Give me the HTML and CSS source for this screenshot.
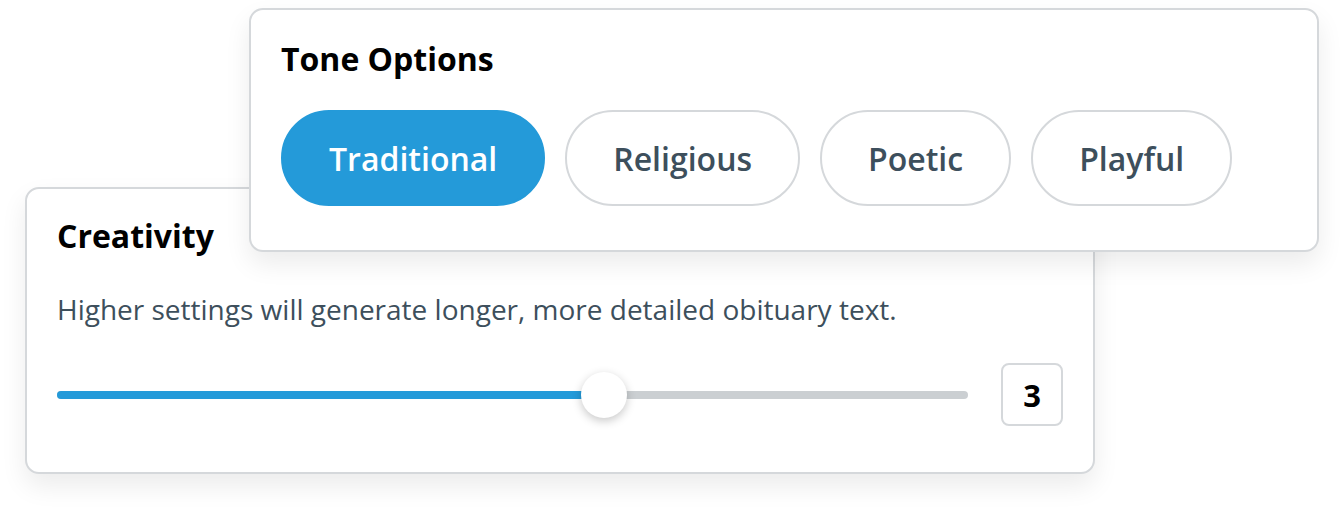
FILE: index.html
```html
<!DOCTYPE html>
<html lang="en">
<head>
    <meta charset="UTF-8">
    <meta name="viewport" content="width=device-width, initial-scale=1.0">
    <title>Obituary Settings</title>
    <link rel="stylesheet" href="styles.css">
</head>
<body>
    <div class="stage">
        <div class="card creativity">
            <h2 class="card-title">Creativity</h2>
            <p class="hint">Higher settings will generate longer, more detailed obituary text.</p>
            <div class="slider-row">
                <div class="slider">
                    <div class="track-fill" style="width: 60%;"></div>
                    <div class="thumb" style="left: 60%;"></div>
                </div>
                <div class="value-box">3</div>
            </div>
        </div>
        <div class="card tone">
            <h2 class="card-title">Tone Options</h2>
            <div class="pills">
                <button class="pill active">Traditional</button>
                <button class="pill">Religious</button>
                <button class="pill">Poetic</button>
                <button class="pill">Playful</button>
            </div>
        </div>
    </div>
</body>
</html>
```

FILE: styles.css
```css
body {
    margin: 0;
    background: #fff;
    font-family: "Open Sans", "Noto Sans", sans-serif;
    color: #000;
}
.stage {
    position: relative;
    box-sizing: border-box;
    width: 1344px;
    height: 516px;
    padding: 187px 0 0 25px;
}
.card {
    box-sizing: border-box;
    width: 1070px;
    background: #fff;
    border: 2px solid #d5d8db;
    border-radius: 14px;
    box-shadow: 0 12px 26px rgba(0, 0, 0, 0.08);
}
.creativity {
    padding: 25px 30px 46px;
}
.tone {
    position: absolute;
    top: 8px;
    left: 249px;
    padding: 27px 30px 44px;
}
.card-title {
    margin: 0;
    font-size: 32px;
    line-height: 44px;
    font-weight: 700;
}
.hint {
    margin: 32px 0 0;
    font-size: 28px;
    line-height: 38px;
    color: #3d4f5c;
}
.slider-row {
    display: flex;
    align-items: center;
    gap: 33px;
    margin-top: 35px;
}
.slider {
    position: relative;
    flex: 1;
    height: 8px;
    border-radius: 4px;
    background: #cbcfd2;
}
.track-fill {
    height: 100%;
    border-radius: 4px;
    background: #249ad9;
}
.thumb {
    position: absolute;
    top: 50%;
    width: 46px;
    height: 46px;
    margin: -23px 0 0 -23px;
    border-radius: 50%;
    background: #fff;
    box-shadow: 0 3px 10px rgba(0, 0, 0, 0.22);
}
.value-box {
    box-sizing: border-box;
    width: 62px;
    height: 63px;
    display: flex;
    align-items: center;
    justify-content: center;
    border: 2px solid #d5d8db;
    border-radius: 8px;
    font-size: 31px;
    font-weight: 700;
}
.pills {
    display: flex;
    gap: 20px;
    margin-top: 29px;
}
.pill {
    height: 96px;
    padding: 0 46px;
    border: 2px solid #d5d8db;
    border-radius: 48px;
    background: #fff;
    font-family: inherit;
    font-size: 32px;
    font-weight: 600;
    color: #3d4f5c;
}
.pill.active {
    background: #249ad9;
    border-color: #249ad9;
    color: #fff;
}
```
